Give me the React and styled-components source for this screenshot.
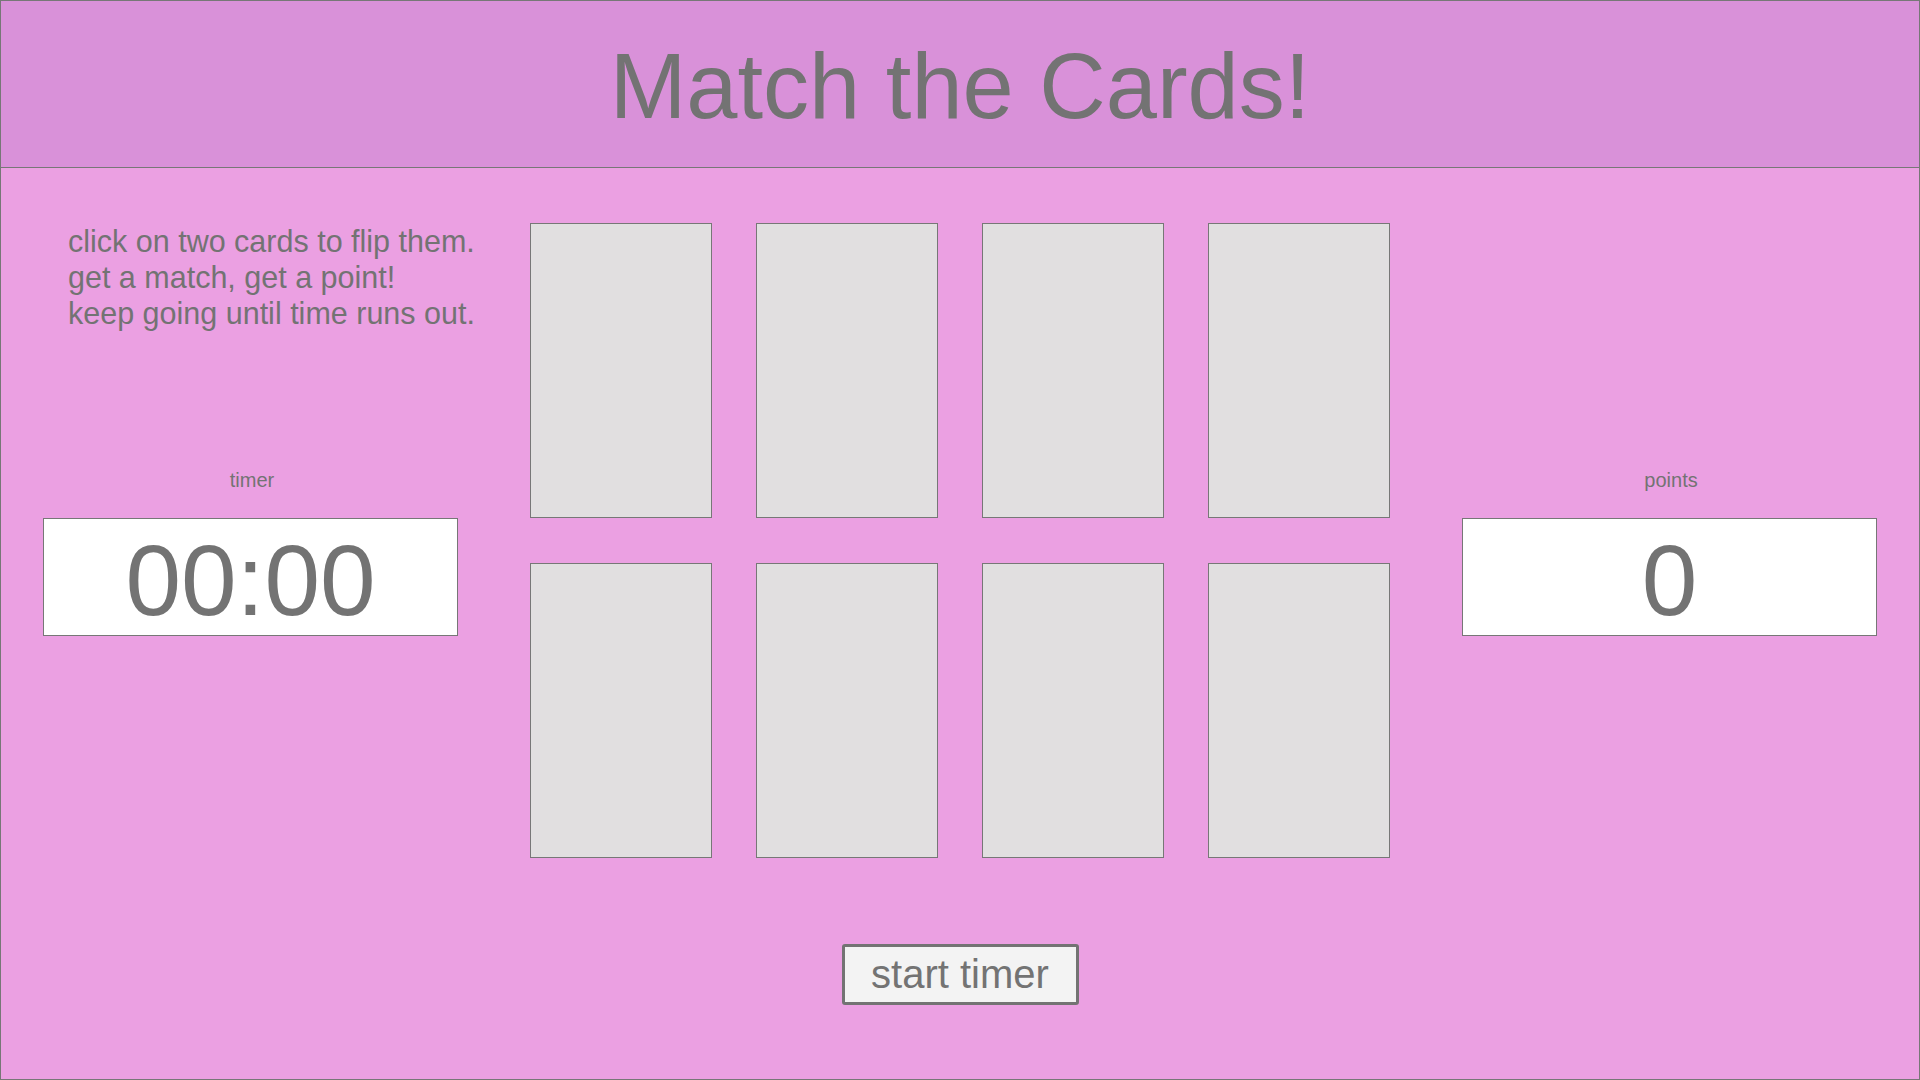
import * as React from "react"
import styled, { createGlobalStyle } from "styled-components"

const GlobalStyle = createGlobalStyle`
  html, body {
    margin: 0;
    padding: 0;
  }
  body {
    font-family: "Liberation Sans", Arial, Helvetica, sans-serif;
    color: #737373;
  }
`

const Page = styled.div`
  box-sizing: border-box;
  width: 1920px;
  height: 1080px;
  border: 1px solid #777;
  background: #eba0e2;
  display: flex;
  flex-direction: column;
`

const Header = styled.header`
  height: 166px;
  background: #d991d9;
  border-bottom: 1px solid #777;
  display: flex;
  align-items: center;
  justify-content: center;

  > h1 {
    margin: 0;
    font-size: 92px;
    font-weight: 400;
    line-height: 1;
    padding-top: 4px;
  }
`

const Board = styled.main`
  display: flex;
  justify-content: center;
  gap: 72px;
  padding-top: 55px;
`

const SidePanel = styled.section`
  width: 415px;
  display: flex;
  flex-direction: column;
  padding-top: ${props => props.$offset || 0}px;
`

const Instructions = styled.p`
  margin: 0 0 137px;
  padding-left: 25px;
  font-size: 30.5px;
  line-height: 36px;
  white-space: nowrap;
`

const StatLabel = styled.div`
  text-align: center;
  font-size: 20px;
  line-height: 24px;
  margin-bottom: 26px;
  padding-left: 3px;
`

const StatBox = styled.div`
  box-sizing: border-box;
  height: 118px;
  background: #fff;
  border: 1px solid #777;
  text-align: center;
  font-size: 100px;
  line-height: 110px;
  padding-top: 6px;
`

const CardGrid = styled.div`
  display: grid;
  grid-template-columns: repeat(4, 182px);
  grid-auto-rows: 295px;
  column-gap: 44px;
  row-gap: 45px;
`

const Card = styled.div`
  box-sizing: border-box;
  background: #e1dfe0;
  border: 1px solid #777;
`

const Footer = styled.div`
  display: flex;
  justify-content: center;
  padding-top: 86px;
`

const StartButton = styled.button`
  box-sizing: border-box;
  width: 237px;
  height: 61px;
  padding: 0;
  border: 3px solid #737373;
  border-radius: 3px;
  background: #f3f3f3;
  color: #737373;
  font-family: inherit;
  font-size: 40px;
  line-height: 55px;
  cursor: pointer;
`

const Stat = ({ label, value }) => (
  <>
    <StatLabel>{label}</StatLabel>
    <StatBox>{value}</StatBox>
  </>
)

const App = () => {
  const cards = Array.from({ length: 8 }, (_, i) => i)

  return (
    <Page>
      <GlobalStyle />
      <Header>
        <h1>Match the Cards!</h1>
      </Header>
      <Board>
        <SidePanel>
          <Instructions>
            click on two cards to flip them.<br />
            get a match, get a point!<br />
            keep going until time runs out.
          </Instructions>
          <Stat label="timer" value="00:00" />
        </SidePanel>
        <CardGrid>
          {cards.map(i => <Card key={i} />)}
        </CardGrid>
        <SidePanel $offset={245}>
          <Stat label="points" value="0" />
        </SidePanel>
      </Board>
      <Footer>
        <StartButton>start timer</StartButton>
      </Footer>
    </Page>
  )
}

export default App
